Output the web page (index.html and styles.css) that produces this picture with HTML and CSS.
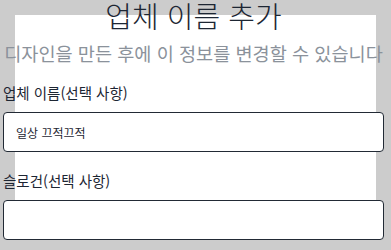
FILE: index.html
```html
<!DOCTYPE html>
<html lang="ko">
<head>
<meta charset="utf-8">
<title>업체 이름 추가</title>
<link rel="stylesheet" href="styles.css">
</head>
<body>
<form class="page">
  <h1 class="title">업체 이름 추가</h1>
  <p class="subtitle">디자인을 만든 후에 이 정보를 변경할 수 있습니다</p>
  <div class="field">
    <label class="label" for="name">업체 이름(선택 사항)</label>
    <input class="input" id="name" type="text" value="일상 끄적끄적">
  </div>
  <div class="field">
    <label class="label" for="slogan">슬로건(선택 사항)</label>
    <input class="input" id="slogan" type="text" value="">
  </div>
</form>
</body>
</html>
```
FILE: styles.css
```css
html,
body {
  margin: 0;
  background: #cccccc;
}
.page {
  box-sizing: border-box;
  display: flex;
  flex-direction: column;
  height: 250px;
  margin: 0;
  padding: 0 7px 0 3px;
  background: linear-gradient(#ffffff, #ffffff) no-repeat 15px 15px / 361px 220px, #cccccc;
  font-family: "Noto Sans CJK KR", "Noto Sans", sans-serif;
}
.title {
  margin: 0;
  font-size: 29px;
  line-height: 31px;
  font-weight: 300;
  text-align: center;
  color: #1d2633;
}
.subtitle {
  margin: 10px 0 18px;
  font-size: 18.6px;
  line-height: 23px;
  text-align: center;
  color: #8b929b;
}
.field {
  display: flex;
  flex-direction: column;
  gap: 9px;
}
.field + .field {
  margin-top: 18px;
}
.label {
  font-size: 14.5px;
  line-height: 21px;
  color: #1d2633;
}
.input {
  box-sizing: border-box;
  height: 40px;
  margin: 0;
  padding: 0 12px;
  border: 1.5px solid #222a35;
  border-radius: 4px;
  background: #ffffff;
  font-family: "Noto Sans CJK KR", "Noto Sans", sans-serif;
  font-size: 12px;
  color: #1d2633;
  outline: none;
}
```
